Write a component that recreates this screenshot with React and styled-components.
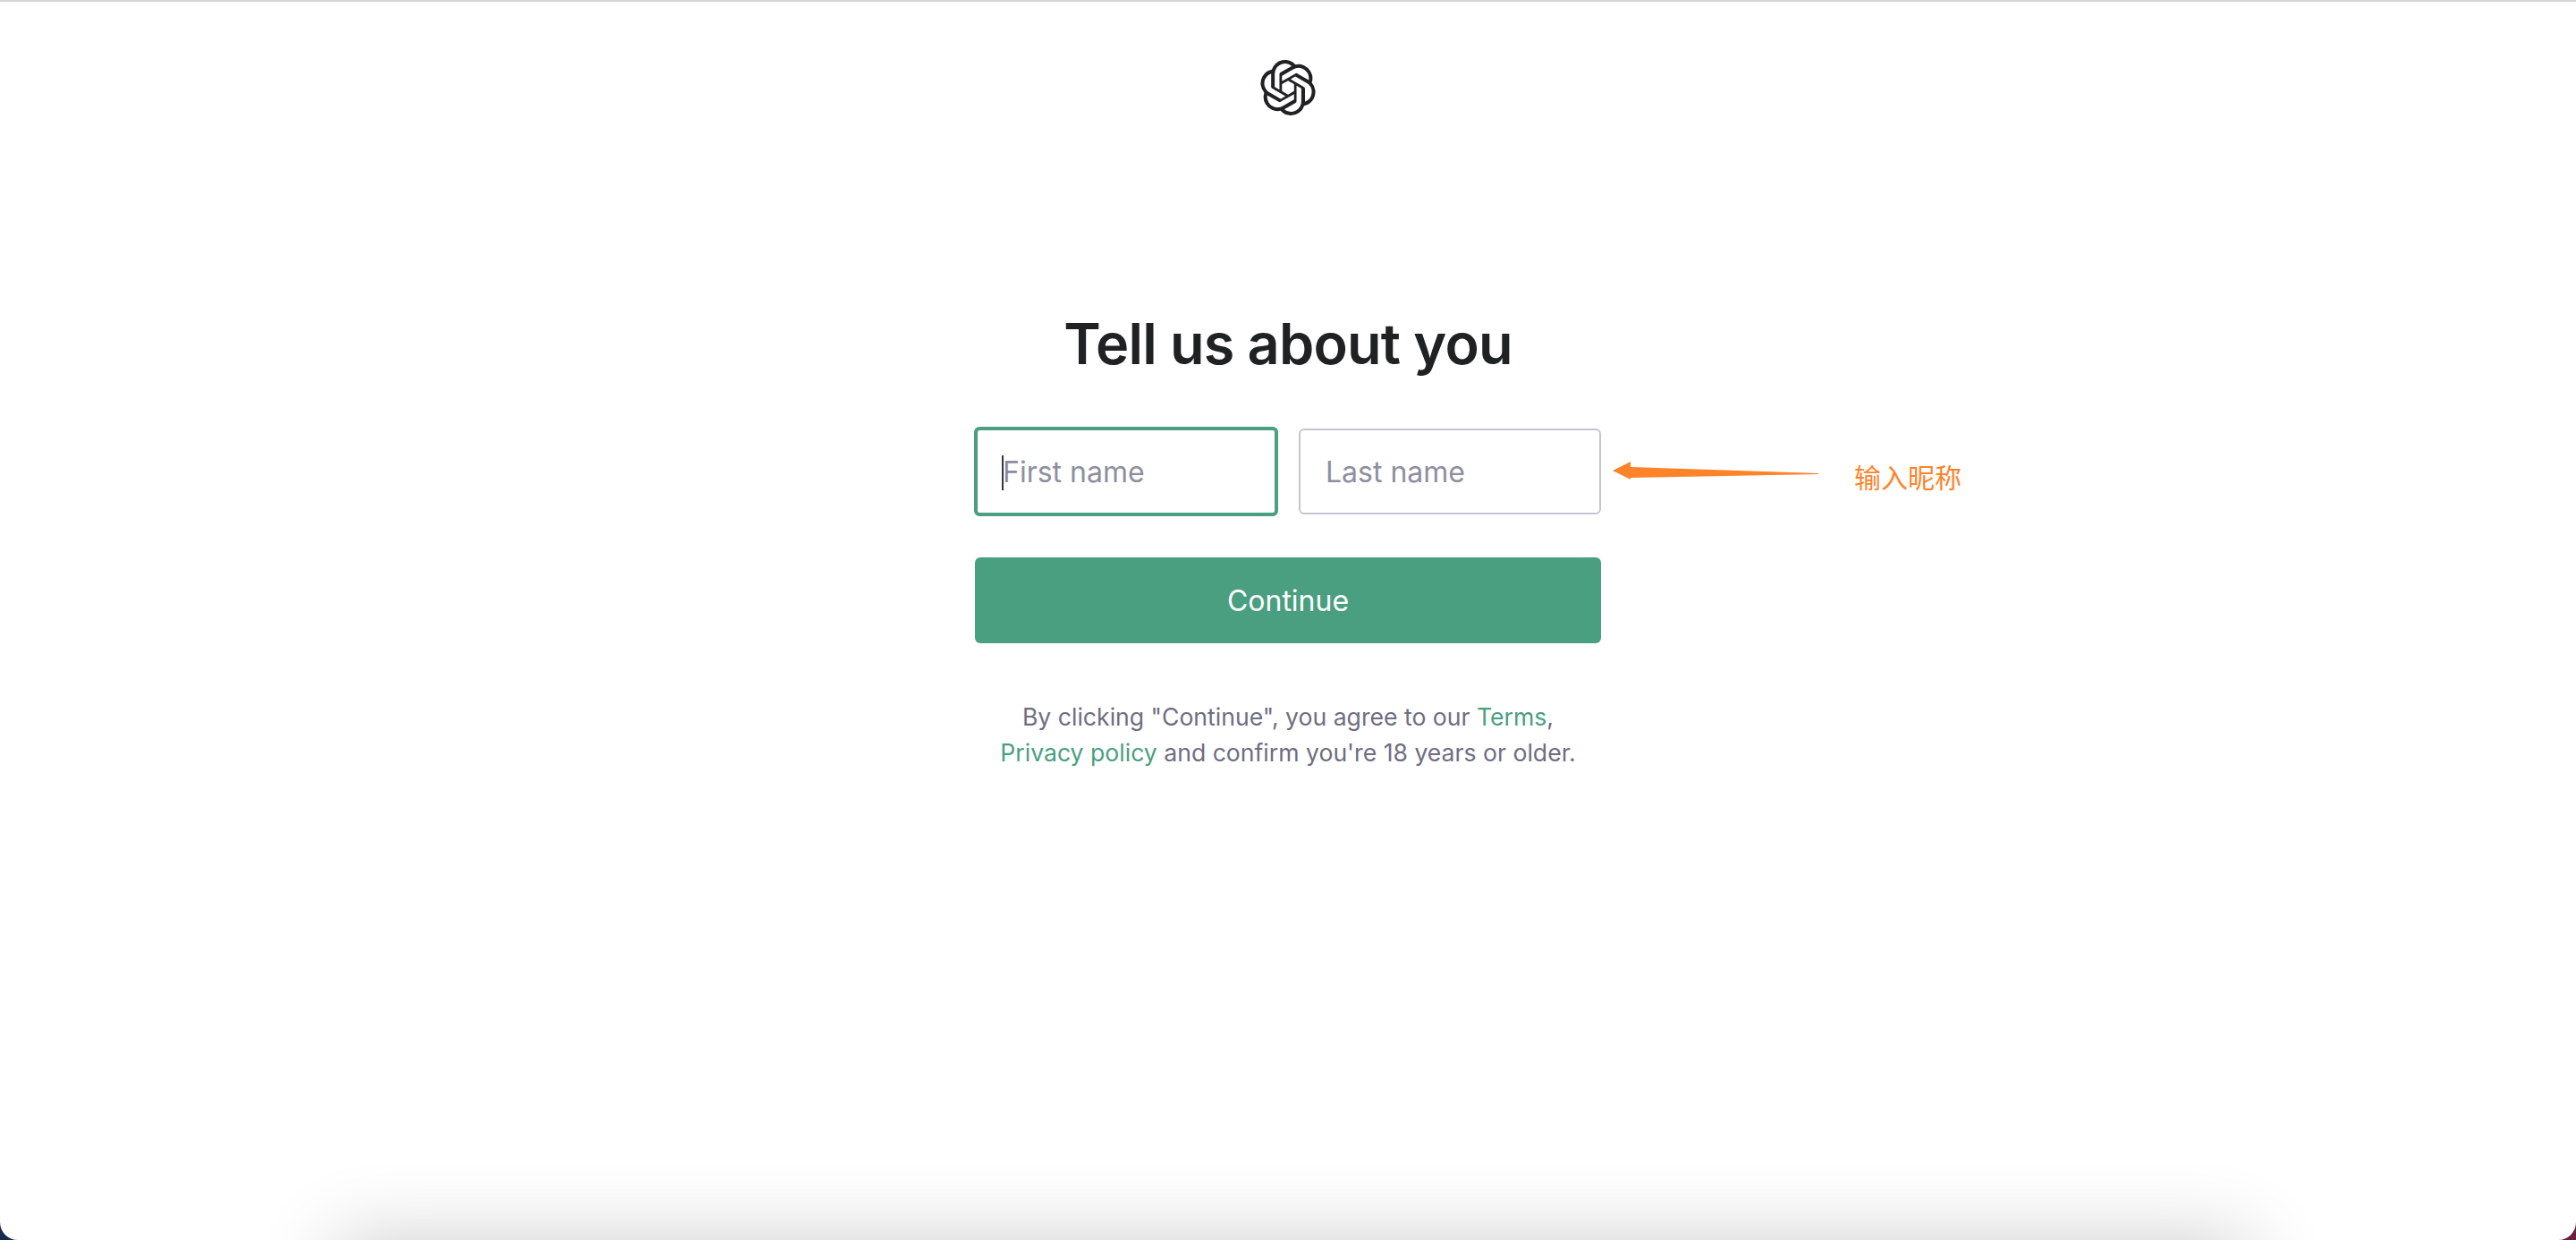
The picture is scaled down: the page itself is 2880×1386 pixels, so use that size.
import React from 'react';
import styled, { createGlobalStyle } from 'styled-components';
import { SiOpenai } from 'react-icons/si';

const GlobalStyle = createGlobalStyle`
	html,
	body {
		margin: 0;
		padding: 0;
		background: linear-gradient(to right, #1a2a4f 0%, #1a2a4f 50%, #6b1f3f 50%, #6b1f3f 100%);
	}
	* {
		box-sizing: border-box;
	}
`;

const PageStyled = styled.div`
	position: relative;
	display: flex;
	flex-direction: column;
	align-items: center;
	height: 100vh;
	overflow: hidden;
	border-top: 2px solid #d4d4d4;
	border-radius: 0 0 20px 20px;
	background: #fff;
	font-family: Inter, 'Noto Sans', sans-serif;
`;

const LogoWrap = styled.header`
	display: flex;
	justify-content: center;
	margin-top: 65px;
	color: #202123;
	font-size: 62px;
	line-height: 0;
`;

const Heading = styled.h1`
	margin: 0;
	margin-top: 217px;
	font-size: 63px;
	line-height: 76px;
	font-weight: 600;
	letter-spacing: -0.8px;
	color: #202123;
`;

const FormStyled = styled.form`
	display: flex;
	flex-direction: column;
	width: 700px;
	margin-top: 57px;
`;

const NameRow = styled.div`
	display: grid;
	grid-template-columns: 338px 338px;
	gap: 24px;
`;

const Field = styled.label`
	position: relative;
	display: block;
	margin: ${(p) => (p.$focused ? '-2px -1px' : '0')};
	height: ${(p) => (p.$focused ? '100px' : '96px')};
	border: ${(p) => (p.$focused ? '4px solid #4a9f80' : '2px solid #c5c5d2')};
	border-radius: 6px;
	background: #fff;
`;

const Input = styled.input`
	width: 100%;
	height: 100%;
	padding: 0 28px;
	border: 0;
	outline: none;
	background: transparent;
	font-family: inherit;
	font-size: 32px;
	color: #202123;

	&::placeholder {
		color: #8e8ea0;
		opacity: 1;
	}
`;

const Caret = styled.span`
	position: absolute;
	left: 27px;
	top: 28px;
	width: 2px;
	height: 39px;
	background: #353740;
`;

const ContinueButton = styled.button`
	height: 96px;
	margin-top: 48px;
	border: 0;
	border-radius: 6px;
	background: #4a9f80;
	font-family: inherit;
	font-size: 32px;
	color: #fff;
`;

const Legal = styled.p`
	width: 700px;
	margin: 62px 0 0;
	text-align: center;
	font-size: 26.6px;
	line-height: 40px;
	color: #6e6e80;

	a {
		color: #4a9f80;
		text-decoration: none;
	}
`;

const Arrow = styled.svg`
	position: absolute;
	left: 1800px;
	top: 510px;
`;

const Note = styled.span`
	position: absolute;
	left: 2073px;
	top: 510px;
	font-family: 'Noto Sans CJK SC', sans-serif;
	font-size: 30px;
	line-height: 40px;
	color: #ff8329;
`;

const BottomShadow = styled.div`
	position: absolute;
	left: 375px;
	right: 365px;
	bottom: -200px;
	height: 200px;
	box-shadow: 0 0 90px 0 rgba(0, 0, 0, 0.2);
`;

export default function App() {
	return (
		<PageStyled>
			<GlobalStyle />
			<LogoWrap>
				<SiOpenai />
			</LogoWrap>
			<Heading>Tell us about you</Heading>
			<FormStyled onSubmit={(e) => e.preventDefault()}>
				<NameRow>
					<Field $focused>
						<Input $focused placeholder="First name" />
						<Caret />
					</Field>
					<Field>
						<Input placeholder="Last name" />
					</Field>
				</NameRow>
				<ContinueButton type="submit">Continue</ContinueButton>
			</FormStyled>
			<Legal>
				By clicking "Continue", you agree to our <a href="#terms">Terms</a>,
				<br />
				<a href="#privacy">Privacy policy</a> and confirm you're 18 years or older.
			</Legal>
			<Arrow width="240" height="30" viewBox="0 0 240 30">
				<path d="M3 14 L23 4 L23 10 L233 17 L233 18 L23 22 L23 24 Z" fill="#ff8329" />
			</Arrow>
			<Note>输入昵称</Note>
			<BottomShadow />
		</PageStyled>
	);
}
